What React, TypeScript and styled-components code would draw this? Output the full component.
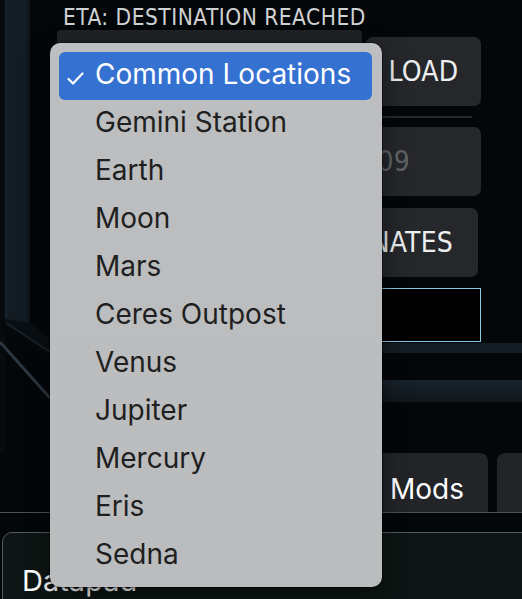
import { createGlobalStyle } from 'styled-components';
import styled from 'styled-components';

const GlobalStyle = createGlobalStyle`
  html, body {
    margin: 0;
    padding: 0;
    background: #04070a;
    overflow: hidden;
  }
`;

const Screen = styled.div`
  position: relative;
  width: 522px;
  height: 599px;
  overflow: hidden;
  background: #04070a;
  display: grid;
  grid-template-columns: 50px 1fr;
  grid-template-rows: 453px 59px 1fr;
`;

const Rail = styled.div`
  grid-row: 1;
  grid-column: 1;
  display: flex;
`;

const Main = styled.div`
  grid-row: 1;
  grid-column: 2;
  display: flex;
  flex-direction: column;
  padding-left: 7px;
`;

const HudFont = `
  font-family: "DejaVu Sans Condensed", "DejaVu Sans", "Liberation Sans", sans-serif;
  font-stretch: condensed;
  letter-spacing: 0.2px;
`;

const EtaLabel = styled.div`
  ${HudFont}
  height: 30px;
  box-sizing: border-box;
  padding: 5px 0 0 6px;
  font-size: 22.5px;
  letter-spacing: 0.5px;
  line-height: 25px;
  color: #cfd1d3;
`;

const ControlRow = styled.div`
  display: flex;
  gap: 4px;
  height: 76px;
  margin-right: 41px;
`;

const LocationSelect = styled.div`
  flex: 1;
  background: #1f2124;
  border-radius: 4px;
`;

const HudButton = styled.div<{ $dim?: boolean; $align?: string; $padRight?: number }>`
  ${HudFont}
  display: flex;
  align-items: center;
  justify-content: ${p => p.$align ?? 'center'};
  padding-right: ${p => p.$padRight ?? 0}px;
  height: 69px;
  box-sizing: border-box;
  background: #25272b;
  border-radius: 7px;
  color: ${p => (p.$dim ? '#5f6266' : '#eceef0')};
  font-size: 28px;
`;

const LoadButton = styled(HudButton)`
  width: 115px;
  margin-top: 7px;
`;

const Divider = styled.div`
  height: 2px;
  margin: 10px 50px 0 0;
  background: #25282c;
`;

const StackItem = styled(HudButton)<{ $top: number; $right: number }>`
  margin-top: ${p => p.$top}px;
  margin-right: ${p => p.$right}px;
`;

const CommandBox = styled.div`
  height: 54px;
  box-sizing: border-box;
  margin: 11px 41px 0 0;
  border: 1px solid #86c9e2;
  background: #000;
`;

const Band = styled.div<{ $h: number; $top: number; $tone: string }>`
  height: ${p => p.$h}px;
  margin-top: ${p => p.$top}px;
  background: ${p => p.$tone};
`;

const TabRow = styled.div`
  grid-row: 2;
  grid-column: 1 / 3;
  display: grid;
  grid-template-columns: 144px 144px auto auto;
  justify-content: start;
  column-gap: 9px;
  padding-left: 60px;
  overflow: hidden;
`;

const Tab = styled.div`
  display: flex;
  align-items: center;
  justify-content: center;
  padding: 12px 24px 0;
  border-radius: 8px 8px 0 0;
  background: #222428;
  color: #ffffff;
  font-family: Inter, "Liberation Sans", sans-serif;
  font-size: 28px;
  white-space: nowrap;
`;

const Bottom = styled.div`
  grid-row: 3;
  grid-column: 1 / 3;
  border-top: 1px solid #4c525a;
  padding: 19px 0 0 2px;
  overflow: hidden;
`;

const DatapadPanel = styled.div`
  height: 120px;
  margin-right: -20px;
  border: 1px solid #535a62;
  border-radius: 10px 10px 0 0;
  background: #0d1614;
  padding: 30px 0 0 19px;
  font-family: Inter, "Liberation Sans", sans-serif;
  font-size: 29px;
  line-height: 36px;
  color: #ffffff;
`;

const Menu = styled.ul`
  position: absolute;
  left: 50px;
  top: 43px;
  width: 332px;
  box-sizing: border-box;
  margin: 0;
  padding: 9px 10px 7px 9px;
  list-style: none;
  border-radius: 10px;
  background: linear-gradient(180deg, #bdbebf 0%, #bbbcbd 100%);
  box-shadow: 0 0 0 1px rgba(0, 0, 0, 0.35), 0 8px 24px rgba(0, 0, 0, 0.5);
`;

const MenuItem = styled.li<{ $selected?: boolean }>`
  position: relative;
  height: 48px;
  box-sizing: border-box;
  padding: 0 0 4px 36px;
  line-height: 44px;
  border-radius: 6px;
  font-family: Inter, "Liberation Sans", sans-serif;
  font-size: 28px;
  color: ${p => (p.$selected ? '#ffffff' : '#1f1f21')};
  background: ${p => (p.$selected ? '#3571d1' : 'transparent')};
`;

const CheckMark = styled.svg`
  position: absolute;
  left: 8px;
  top: 20px;
`;

const locations = [
  'Common Locations',
  'Gemini Station',
  'Earth',
  'Moon',
  'Mars',
  'Ceres Outpost',
  'Venus',
  'Jupiter',
  'Mercury',
  'Eris',
  'Sedna'
];

const FrameArt = () => (
  <svg width="50" height="453" viewBox="0 0 50 453">
    <rect x="0" y="0" width="5" height="453" fill="#070b0d" />
    <rect x="5" y="0" width="25" height="323" fill="#141c23" />
    <rect x="5" y="0" width="2" height="323" fill="#1b242c" />
    <rect x="27" y="0" width="3" height="323" fill="#0f161b" />
    <polygon points="0,318 30,323 50,338 50,352 0,318" fill="#0a0f13" />
    <polygon points="0,325 50,360 50,352 0,318" fill="#06090b" />
    <line x1="0" y1="342" x2="50" y2="398" stroke="#2b3640" strokeWidth="3" />
    <line x1="6" y1="323" x2="50" y2="352" stroke="#19222a" strokeWidth="2" />
  </svg>
);

const App = (): JSX.Element => (
  <>
    <GlobalStyle />
    <Screen>
      <Rail>
        <FrameArt />
      </Rail>
      <Main>
        <EtaLabel>ETA: DESTINATION REACHED</EtaLabel>
        <ControlRow>
          <LocationSelect />
          <LoadButton>LOAD</LoadButton>
        </ControlRow>
        <Divider />
        <StackItem $top={9} $right={41} $dim $align='flex-end' $padRight={71}>
          X 0000 Y 0000 Z 0009
        </StackItem>
        <StackItem $top={12} $right={44} $align='flex-end' $padRight={25}>
          SET COORDINATES
        </StackItem>
        <CommandBox />
        <Band $h={10} $top={1} $tone='#141d24' />
        <Band $h={22} $top={27} $tone='linear-gradient(180deg, #18222a, #10171d)' />
      </Main>
      <TabRow>
        <Tab>Nav</Tab>
        <Tab>Ship</Tab>
        <Tab>Mods</Tab>
        <Tab>Systems</Tab>
      </TabRow>
      <Bottom>
        <DatapadPanel>Datapad</DatapadPanel>
      </Bottom>
      <Menu>
        {locations.map((name, i) => (
          <MenuItem key={name} $selected={i === 0}>
            {i === 0 && (
              <CheckMark width="17" height="13" viewBox="0 0 17 13">
                <path
                  d="M1.5 7 L6 11.5 L15.5 1.5"
                  fill="none"
                  stroke="#ffffff"
                  strokeWidth="2.2"
                  strokeLinecap="round"
                  strokeLinejoin="round"
                />
              </CheckMark>
            )}
            {name}
          </MenuItem>
        ))}
      </Menu>
    </Screen>
  </>
);

export default App;
